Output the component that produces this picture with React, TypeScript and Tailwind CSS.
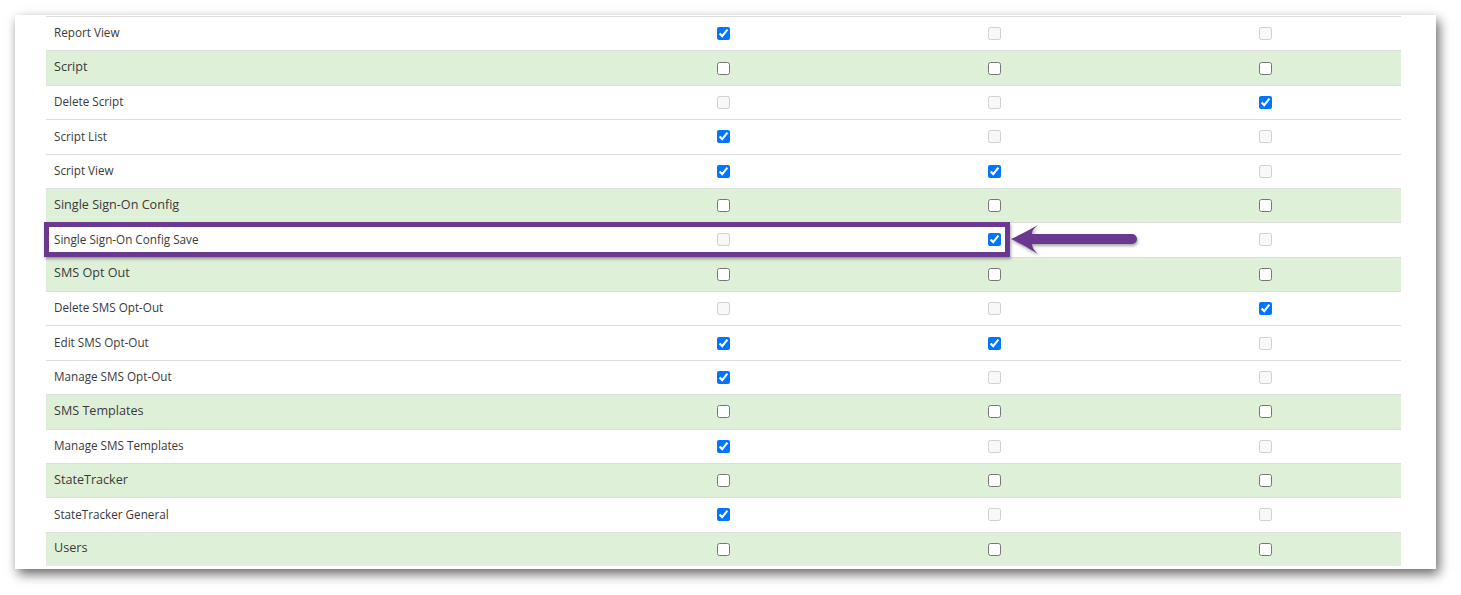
import React from "react";

type S = "c" | "u" | "d";
type Row = { label: string; group?: boolean; s: [S, S, S] };

const rows: Row[] = [
  { label: "Report View", s: ["c", "d", "d"] },
  { label: "Script", group: true, s: ["u", "u", "u"] },
  { label: "Delete Script", s: ["d", "d", "c"] },
  { label: "Script List", s: ["c", "d", "d"] },
  { label: "Script View", s: ["c", "c", "d"] },
  { label: "Single Sign-On Config", group: true, s: ["u", "u", "u"] },
  { label: "Single Sign-On Config Save", s: ["d", "c", "d"] },
  { label: "SMS Opt Out", group: true, s: ["u", "u", "u"] },
  { label: "Delete SMS Opt-Out", s: ["d", "d", "c"] },
  { label: "Edit SMS Opt-Out", s: ["c", "c", "d"] },
  { label: "Manage SMS Opt-Out", s: ["c", "d", "d"] },
  { label: "SMS Templates", group: true, s: ["u", "u", "u"] },
  { label: "Manage SMS Templates", s: ["c", "d", "d"] },
  { label: "StateTracker", group: true, s: ["u", "u", "u"] },
  { label: "StateTracker General", s: ["c", "d", "d"] },
  { label: "Users", group: true, s: ["u", "u", "u"] },
];

function Box({ s }: { s: S }) {
  return (
    <div className="flex items-center justify-center">
      <input
        type="checkbox"
        readOnly
        checked={s === "c"}
        disabled={s === "d"}
        className="m-0 h-[13px] w-[13px]"
      />
    </div>
  );
}

export default function App() {
  return (
    <div
      className="w-[1461px] h-[595px] bg-white pt-[15px] pl-[15px]"
      style={{ fontFamily: '"Open Sans", "Noto Sans", sans-serif' }}
    >
      <div className="relative w-[1421px] h-[554px] bg-white overflow-visible shadow-[3px_5px_11px_rgba(0,0,0,0.6)]">
        <div className="h-full overflow-hidden pl-[31px] pt-[1px]">
          <div className="w-[1355px]">
            {rows.map((r, i) => (
              <div
                key={i}
                className={`grid grid-cols-[542px_271px_271px_271px] h-[34.375px] border-t border-[#dddddd] ${
                  r.group ? "bg-[#dff0d8]" : "bg-white"
                }`}
              >
                <div
                  className={`flex items-center pl-[8px] pb-[1px] text-[#3a3a3a] ${
                    r.group ? "text-[12.6px]" : "text-[11.7px]"
                  }`}
                >
                  {r.label}
                </div>
                <Box s={r.s[0]} />
                <Box s={r.s[1]} />
                <Box s={r.s[2]} />
              </div>
            ))}
          </div>
        </div>
        <div className="absolute left-[29px] top-[206.5px] w-[966px] h-[35px] border-[5px] border-[#6b3890] shadow-[1px_2px_3px_rgba(0,0,0,0.35)]" />
        <svg
          className="absolute left-[996px] top-[209px] drop-shadow-[1px_2px_1.5px_rgba(0,0,0,0.35)]"
          width="132"
          height="32"
          viewBox="0 0 132 32"
        >
          <path
            d="M0 15 Q14 8.5 27 1 Q20.5 6 21 10 L121 10 A5 5 0 0 1 121 20 L21 20 Q20.5 24 27 30 Q14 21.5 0 15 Z"
            fill="#6b3890"
          />
        </svg>
      </div>
    </div>
  );
}
